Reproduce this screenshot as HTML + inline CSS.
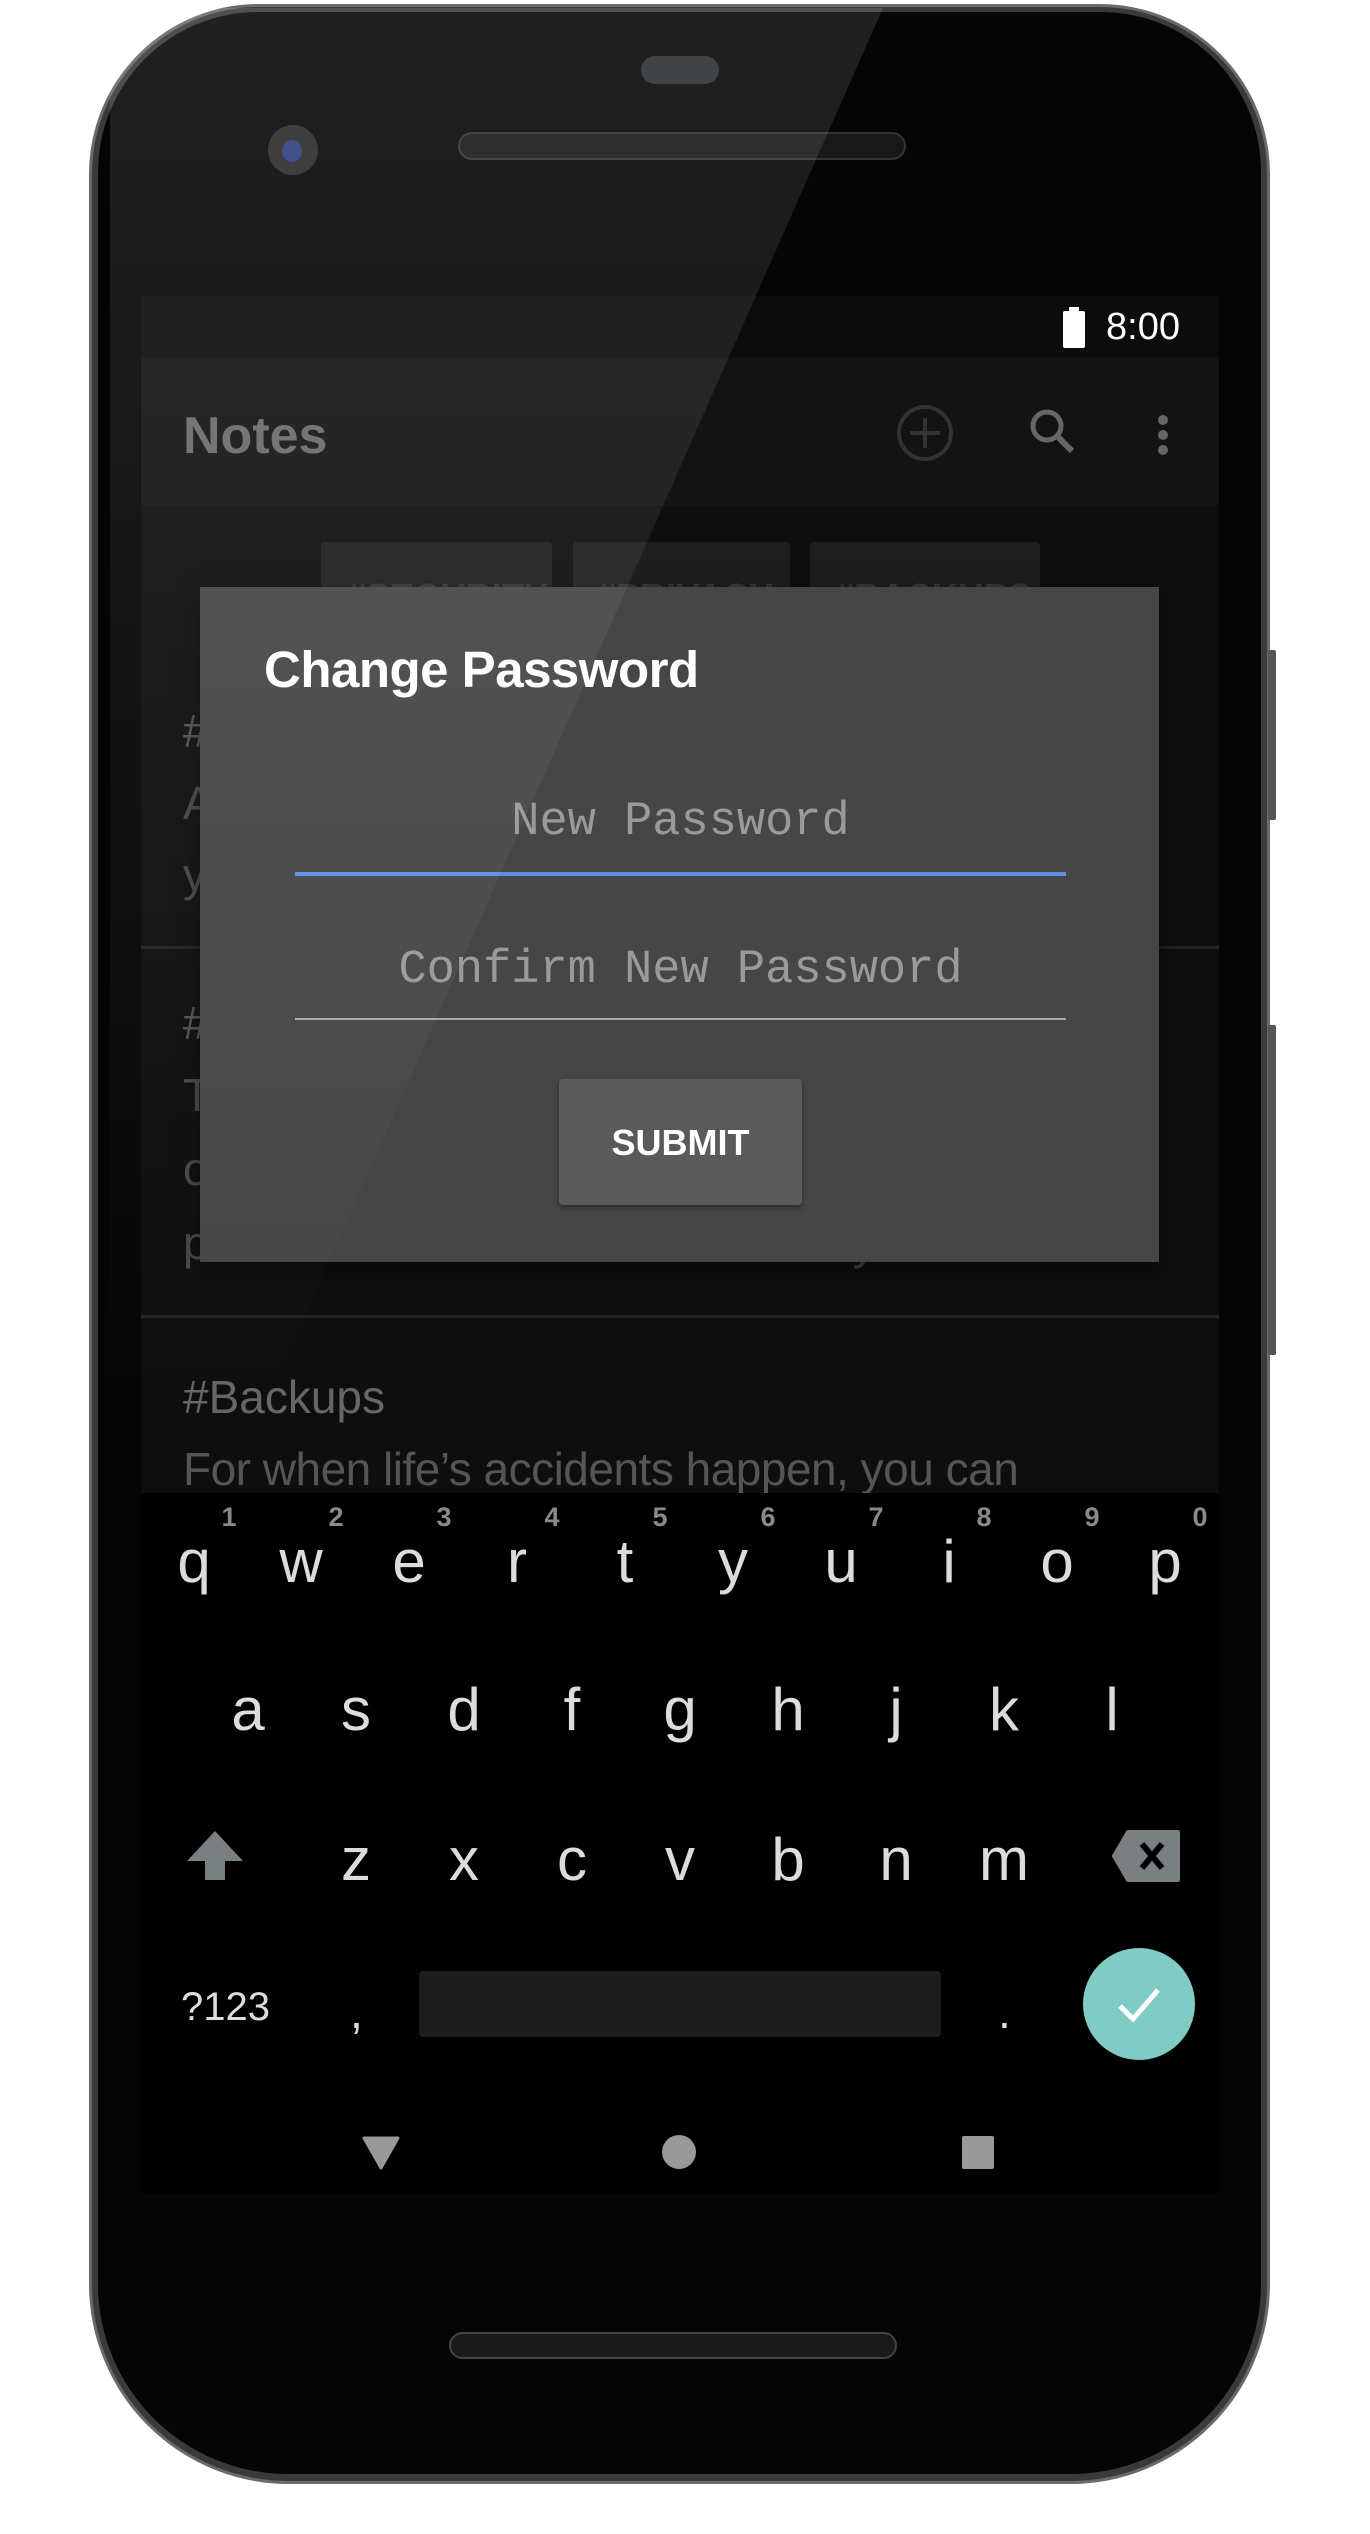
<!DOCTYPE html>
<html><head><meta charset="utf-8">
<style>
*{margin:0;padding:0;box-sizing:border-box}
html,body{width:1370px;height:2534px;background:#fff;overflow:hidden;font-family:"Liberation Sans",sans-serif}
.abs{position:absolute}
#phone{position:absolute;left:89px;top:4px;width:1181px;height:2480px;border-radius:170px 170px 200px 200px;background:#3a3a3a;border:3px solid #6a6a6a}
#bez{position:absolute;left:98px;top:12px;width:1163px;height:2462px;border-radius:160px 160px 190px 190px;background:#050505}
#screen{position:absolute;left:141px;top:296px;width:1078px;height:1898px;background:#000;overflow:hidden}
.t{position:absolute;white-space:nowrap}
.key{position:absolute;width:60px;text-align:center;font-size:60px;color:#dcdcdc;line-height:1}
.num{position:absolute;width:40px;text-align:center;font-size:27px;color:#8a8a8a;font-weight:bold;line-height:1}
</style></head><body>
<div id="phone"></div>
<div id="bez"></div>
<div class="abs" style="left:1268px;top:650px;width:8px;height:170px;background:#555;border-radius:2px"></div>
<div class="abs" style="left:1268px;top:1025px;width:8px;height:330px;background:#555;border-radius:2px"></div>
<div class="abs" style="left:641px;top:56px;width:78px;height:28px;border-radius:14px;background:#2a2d31"></div>
<div class="abs" style="left:268px;top:125px;width:50px;height:50px;border-radius:50%;background:#2a2a2a"></div>
<div class="abs" style="left:282px;top:140px;width:20px;height:22px;border-radius:50%;background:#2f3d80"></div>
<div class="abs" style="left:458px;top:132px;width:448px;height:28px;border-radius:14px;background:#181818;border:2px solid #333"></div>
<div class="abs" style="left:449px;top:2332px;width:448px;height:27px;border-radius:14px;background:#1a1a1a;border:2px solid #444"></div>

<div id="screen">
  <div class="abs" style="left:0;top:0;width:1078px;height:62px;background:#0c0c0c"></div>
  <div class="abs" style="left:922px;top:15px;width:22px;height:37px;background:#fff;border-radius:2px"></div>
  <div class="abs" style="left:928px;top:11px;width:10px;height:5px;background:#fff"></div>
  <div class="t" style="left:965px;top:10px;font-size:38px;color:#fff">8:00</div>
  <div class="abs" style="left:0;top:62px;width:1078px;height:148px;background:#131313"></div>
  <div class="t" style="left:42px;top:110px;font-size:52px;color:#6a6a6a;font-weight:bold">Notes</div>
  <svg class="abs" style="left:750px;top:100px" width="360" height="80">
    <circle cx="34" cy="37" r="26" fill="none" stroke="#333" stroke-width="4"/>
    <path d="M34 22v30M19 37h30" stroke="#333" stroke-width="4"/>
    <circle cx="156" cy="30" r="14" fill="none" stroke="#666" stroke-width="5"/>
    <path d="M166 40l15 15" stroke="#666" stroke-width="6"/>
    <circle cx="272" cy="24" r="5" fill="#666"/><circle cx="272" cy="39" r="5" fill="#666"/><circle cx="272" cy="54" r="5" fill="#666"/>
  </svg>
  <div class="abs" style="left:0;top:210px;width:1078px;height:987px;background:#0e0e0e"></div>
  <div class="abs" style="left:180px;top:246px;width:231px;height:60px;background:#1e1e1e;border-radius:4px"></div>
  <div class="abs" style="left:432px;top:246px;width:217px;height:60px;background:#1e1e1e;border-radius:4px"></div>
  <div class="abs" style="left:669px;top:246px;width:230px;height:60px;background:#1e1e1e;border-radius:4px"></div>
  <div class="t" style="left:205px;top:280px;font-size:36px;color:#3a3a3a;font-weight:bold">#SECURITY</div>
  <div class="t" style="left:455px;top:280px;font-size:36px;color:#3a3a3a;font-weight:bold">#PRIVACY</div>
  <div class="t" style="left:693px;top:280px;font-size:36px;color:#3a3a3a;font-weight:bold">#BACKUPS</div>
  <div class="t" style="left:42px;top:408px;font-size:46px;color:#555">#Security</div>
  <div class="t" style="left:42px;top:480px;font-size:46px;color:#4a4a4a">All your notes are encrypted so only</div>
  <div class="t" style="left:42px;top:552px;font-size:46px;color:#4a4a4a">you can read them.</div>
  <div class="abs" style="left:0;top:650px;width:1078px;height:3px;background:#222"></div>
  <div class="t" style="left:42px;top:700px;font-size:46px;color:#555">#Privacy</div>
  <div class="t" style="left:42px;top:772px;font-size:46px;color:#4a4a4a">The notes you write are yours and</div>
  <div class="t" style="left:42px;top:846px;font-size:46px;color:#4a4a4a">only you have access to them,</div>
  <div class="t" style="left:42px;top:920px;font-size:46px;color:#4a4a4a">protected with end-to-end security.</div>
  <div class="abs" style="left:0;top:1019px;width:1078px;height:3px;background:#222"></div>
  <div class="t" style="left:42px;top:1074px;font-size:46px;color:#666">#Backups</div>
  <div class="t" style="left:42px;top:1146px;font-size:46px;color:#555;letter-spacing:-0.5px">For when life’s accidents happen, you can</div>
  <div class="abs" style="left:0;top:1197px;width:1078px;height:701px;background:#000"></div>
</div>

<div id="kb">
<div class="num" style="left:209px;top:1504px">1</div><div class="num" style="left:316px;top:1504px">2</div><div class="num" style="left:424px;top:1504px">3</div><div class="num" style="left:532px;top:1504px">4</div><div class="num" style="left:640px;top:1504px">5</div><div class="num" style="left:748px;top:1504px">6</div><div class="num" style="left:856px;top:1504px">7</div><div class="num" style="left:964px;top:1504px">8</div><div class="num" style="left:1072px;top:1504px">9</div><div class="num" style="left:1180px;top:1504px">0</div>
<div class="key" style="left:164px;top:1532px">q</div><div class="key" style="left:271px;top:1532px">w</div><div class="key" style="left:379px;top:1532px">e</div><div class="key" style="left:487px;top:1532px">r</div><div class="key" style="left:595px;top:1532px">t</div><div class="key" style="left:703px;top:1532px">y</div><div class="key" style="left:811px;top:1532px">u</div><div class="key" style="left:919px;top:1532px">i</div><div class="key" style="left:1027px;top:1532px">o</div><div class="key" style="left:1135px;top:1532px">p</div>
<div class="key" style="left:218px;top:1680px">a</div><div class="key" style="left:326px;top:1680px">s</div><div class="key" style="left:434px;top:1680px">d</div><div class="key" style="left:542px;top:1680px">f</div><div class="key" style="left:650px;top:1680px">g</div><div class="key" style="left:758px;top:1680px">h</div><div class="key" style="left:866px;top:1680px">j</div><div class="key" style="left:974px;top:1680px">k</div><div class="key" style="left:1082px;top:1680px">l</div>
<div class="key" style="left:326px;top:1830px">z</div><div class="key" style="left:434px;top:1830px">x</div><div class="key" style="left:542px;top:1830px">c</div><div class="key" style="left:650px;top:1830px">v</div><div class="key" style="left:758px;top:1830px">b</div><div class="key" style="left:866px;top:1830px">n</div><div class="key" style="left:974px;top:1830px">m</div>
<svg class="abs" style="left:180px;top:1825px" width="70" height="60"><path d="M35 6 L63 36 L45 36 L45 55 L25 55 L25 36 L7 36 Z" fill="#7a7f82"/></svg>
<svg class="abs" style="left:1110px;top:1828px" width="72" height="56"><path d="M18 4 H68 V52 H18 L4 28 Z" fill="#7a7f82" stroke="#7a7f82" stroke-width="4" stroke-linejoin="round"/><path d="M32 16 L52 40 M52 16 L32 40" stroke="#000" stroke-width="6"/></svg>
<div class="t" style="left:181px;top:1985px;font-size:40px;color:#ddd">?123</div>
<div class="t" style="left:350px;top:1985px;font-size:46px;color:#ddd">,</div>
<div class="abs" style="left:419px;top:1971px;width:522px;height:66px;background:#1d1d1d;border-radius:4px"></div>
<div class="t" style="left:998px;top:1985px;font-size:46px;color:#ddd">.</div>
<div class="abs" style="left:1083px;top:1948px;width:112px;height:112px;border-radius:50%;background:#80cbc4"></div>
<svg class="abs" style="left:1110px;top:1978px" width="60" height="52"><path d="M10 28 L23 41 L48 12" fill="none" stroke="#fff" stroke-width="5"/></svg>
<svg class="abs" style="left:360px;top:2130px" width="660" height="45"><path d="M4 8 H38 L21 38 Z" fill="#999" stroke="#999" stroke-width="3" stroke-linejoin="round"/><circle cx="319" cy="22" r="17" fill="#999"/><rect x="602" y="6" width="32" height="33" rx="2" fill="#999"/></svg>
</div>

<div class="abs" style="left:200px;top:587px;width:959px;height:675px;background:#464646;box-shadow:0 6px 20px rgba(0,0,0,.5)"></div>
<div class="t" style="left:264px;top:640px;font-size:51px;color:#fff;font-weight:bold;letter-spacing:-0.5px">Change Password</div>
<div class="t" style="left:295px;width:771px;top:796px;text-align:center;font-family:'Liberation Mono',monospace;font-size:47px;color:#9a9a9a">New Password</div>
<div class="abs" style="left:295px;top:872px;width:771px;height:4px;background:#5b8fe6"></div>
<div class="t" style="left:295px;width:771px;top:944px;text-align:center;font-family:'Liberation Mono',monospace;font-size:47px;color:#9a9a9a">Confirm New Password</div>
<div class="abs" style="left:295px;top:1018px;width:771px;height:2px;background:#aaa"></div>
<div class="abs" style="left:559px;top:1079px;width:243px;height:126px;background:#5a5a5b;border-radius:4px;box-shadow:0 3px 6px rgba(0,0,0,.35)"></div>
<div class="t" style="left:559px;width:243px;top:1122px;text-align:center;font-size:36px;color:#fff;font-weight:bold">SUBMIT</div>

<svg class="abs" style="left:0;top:0" width="1370" height="1400">
<defs><linearGradient id="g" x1="0" y1="0" x2="0" y2="1"><stop offset="0" stop-color="#fff" stop-opacity="0.11"/><stop offset="0.6" stop-color="#fff" stop-opacity="0.045"/><stop offset="1" stop-color="#fff" stop-opacity="0"/></linearGradient></defs>
<path d="M110 8 L883 8 L268 1400 L110 1400 Z" fill="url(#g)"/>
</svg>
</body></html>
